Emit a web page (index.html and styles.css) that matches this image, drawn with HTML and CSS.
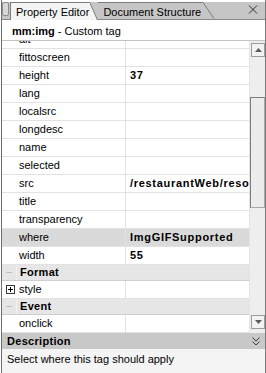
FILE: index.html
```html
<!DOCTYPE html>
<html lang="en">
<head>
  <meta charset="UTF-8" />
  <title>Property Editor</title>
  <link rel="stylesheet" href="styles.css">
</head>
<body>

<div class="panel">
  <div class="tabs">
    <span class="grip"></span>
    <div class="tab active">Property Editor</div>
    <svg class="slant active-slant" width="8" height="17" viewBox="0 0 8 17"><polygon points="0,0 7.5,17 0,17" fill="#f4f4f4"/><line x1="0" y1="0" x2="7.5" y2="17" stroke="#7c7c7c"/></svg>
    <div class="tab">Document Structure</div>
    <svg class="slant" width="12" height="16" viewBox="0 0 12 16"><line x1="0" y1="0" x2="11" y2="16" stroke="#7c7c7c"/></svg>
    <span class="spacer"></span>
    <svg class="close" width="10" height="9" viewBox="0 0 10 9"><path d="M1 0.5 L9 8.5 M9 0.5 L1 8.5" stroke="#2a2a2a" stroke-width="1"/></svg>
  </div>

  <div class="tagline"><b>mm:img</b> - Custom tag</div>

  <div class="body">
    <div class="grid">
      <div class="rows">
        <div class="row"><div class="name">alt</div><div class="val"></div></div>
        <div class="row"><div class="name">fittoscreen</div><div class="val"></div></div>
        <div class="row"><div class="name">height</div><div class="val">37</div></div>
        <div class="row"><div class="name">lang</div><div class="val"></div></div>
        <div class="row"><div class="name">localsrc</div><div class="val"></div></div>
        <div class="row"><div class="name">longdesc</div><div class="val"></div></div>
        <div class="row"><div class="name">name</div><div class="val"></div></div>
        <div class="row"><div class="name">selected</div><div class="val"></div></div>
        <div class="row"><div class="name">src</div><div class="val">/restaurantWeb/resources/images/logo.gif</div></div>
        <div class="row"><div class="name">title</div><div class="val"></div></div>
        <div class="row"><div class="name">transparency</div><div class="val"></div></div>
        <div class="row selected"><div class="name">where</div><div class="val">ImgGIFSupported</div></div>
        <div class="row"><div class="name">width</div><div class="val">55</div></div>
        <div class="cat"><span class="minus">&minus;</span><span class="cat-name">Format</span></div>
        <div class="row"><div class="name"><svg class="plus" width="9" height="9" viewBox="0 0 9 9"><rect x="0.5" y="0.5" width="8" height="8" fill="#fff" stroke="#3a3a3a"/><path d="M2 4.5 H7 M4.5 2 V7" stroke="#000"/></svg>style</div><div class="val"></div></div>
        <div class="cat"><span class="minus">&minus;</span><span class="cat-name">Event</span></div>
        <div class="row"><div class="name">onclick</div><div class="val"></div></div>
      </div>
    </div>
    <div class="scrollbar">
      <div class="sb-btn up">
        <svg width="7" height="4" viewBox="0 0 7 4"><polygon points="3.5,0 7,4 0,4" fill="#5a5a5a"/></svg>
      </div>
      <div class="track"><div class="thumb"></div></div>
      <div class="sb-btn down">
        <svg width="7" height="4" viewBox="0 0 7 4"><polygon points="0,0 7,0 3.5,4" fill="#5a5a5a"/></svg>
      </div>
    </div>
  </div>

  <div class="desc-bar">
    <span>Description</span>
    <svg width="8" height="9" viewBox="0 0 8 9"><path d="M0.5 0.5 L4 4 L7.5 0.5 M0.5 4.5 L4 8 L7.5 4.5" fill="none" stroke="#3a3a3a"/></svg>
  </div>
  <div class="desc-text">Select where this tag should apply</div>
</div>

</body>
</html>
```

FILE: styles.css
```css
body {
  margin: 0;
  padding: 0;
  font-family: "Liberation Sans", Arial, sans-serif;
  font-size: 11px;
  color: #000;
  background: #fff;
}

.panel {
  width: 263px;
  height: 373px;
  margin-left: 1px;
  border-left: 1px solid #6e6e6e;
  border-right: 1px solid #7a7a7a;
  display: flex;
  flex-direction: column;
  overflow: hidden;
}

/* tab strip */
.tabs {
  height: 20px;
  box-sizing: border-box;
  padding-top: 2px;
  background: linear-gradient(#fff 0, #fff 2px, #c6c6c6 2px);
  border-bottom: 1px solid #8a8a8a;
  display: flex;
  align-items: flex-end;
}

.grip {
  width: 5px;
  height: 12px;
  margin: 0 1px 3px 0;
  border: 1px solid #8c8c8c;
  border-radius: 2px;
  background: #d8d8d8;
  align-self: flex-end;
}

.tab {
  height: 17px;
  box-sizing: border-box;
  padding: 2px 2px 0 5px;
  border-top: 1px solid #7c7c7c;
  white-space: nowrap;
  line-height: 14px;
}

.tab.active {
  background: #f4f4f4;
  border-left: 1px solid #7c7c7c;
  height: 18px;
  margin-bottom: -1px;
  padding-left: 5px;
  padding-right: 1px;
}

.active-slant {
  margin-bottom: -1px;
  display: block;
  align-self: flex-end;
  height: 18px;
}

.slant {
  display: block;
}

.tab + .slant {
  height: 17px;
}

.spacer {
  flex: 1;
}

.close {
  margin: 0 7px 5px 0;
}

/* tag line */
.tagline {
  height: 21px;
  box-sizing: border-box;
  padding: 5px 0 0 10px;
  border-bottom: 1px solid #c4c4c4;
  background: #fff;
}

/* property grid */
.body {
  height: 292px;
  display: flex;
}

.grid {
  flex: 1;
  overflow: hidden;
  background: #fff;
}

.rows {
  margin-top: -10px;
}

.row {
  display: flex;
  height: 18px;
  box-sizing: border-box;
  border-bottom: 1px solid #e2e2e2;
  line-height: 17px;
}

.row.selected {
  background: #dadada;
}

.name {
  width: 124px;
  box-sizing: border-box;
  padding-left: 17px;
  border-right: 1px solid #e2e2e2;
  white-space: nowrap;
  display: flex;
  align-items: center;
}

.val {
  flex: 1;
  padding-left: 4px;
  font-weight: bold;
  letter-spacing: 0.7px;
  white-space: nowrap;
  overflow: hidden;
}

.plus {
  margin: 0 4px 0 -13px;
}

.cat {
  display: flex;
  height: 16px;
  box-sizing: border-box;
  background: #e6e6e6;
  border-bottom: 1px solid #cfcfcf;
  line-height: 15px;
}

.minus {
  width: 14px;
  color: #b4b4b4;
  text-align: center;
  border-right: 1px solid #f2f2f2;
}

.cat-name {
  padding-left: 3px;
  font-weight: bold;
  letter-spacing: 0.3px;
}

/* scrollbar */
.scrollbar {
  width: 15px;
  background: #eeeeee;
  border-left: 1px solid #e4e4e4;
  display: flex;
  flex-direction: column;
  align-items: flex-end;
}

.sb-btn {
  width: 14px;
  height: 14px;
  box-sizing: border-box;
  border: 1px solid #9c9c9c;
  background: #f2f2f2;
  display: flex;
  align-items: center;
  justify-content: center;
}

.sb-btn.up {
  margin-top: 2px;
}

.sb-btn.down {
  margin-bottom: 4px;
}

.track {
  flex: 1;
  width: 15px;
}

.thumb {
  margin-top: 40px;
  height: 111px;
  box-sizing: border-box;
  border: 1px solid #7c7c7c;
  border-right-color: #a8a8a8;
  border-bottom-color: #a8a8a8;
  background: #ececec;
}

/* description */
.desc-bar {
  height: 16px;
  box-sizing: border-box;
  background: #c8c8c8;
  padding: 0 5px 0 5px;
  display: flex;
  align-items: center;
  justify-content: space-between;
  font-weight: bold;
  letter-spacing: 0.3px;
}

.desc-text {
  flex: 1;
  background: #f4f4f4;
  padding: 4px 0 0 5px;
}
```
